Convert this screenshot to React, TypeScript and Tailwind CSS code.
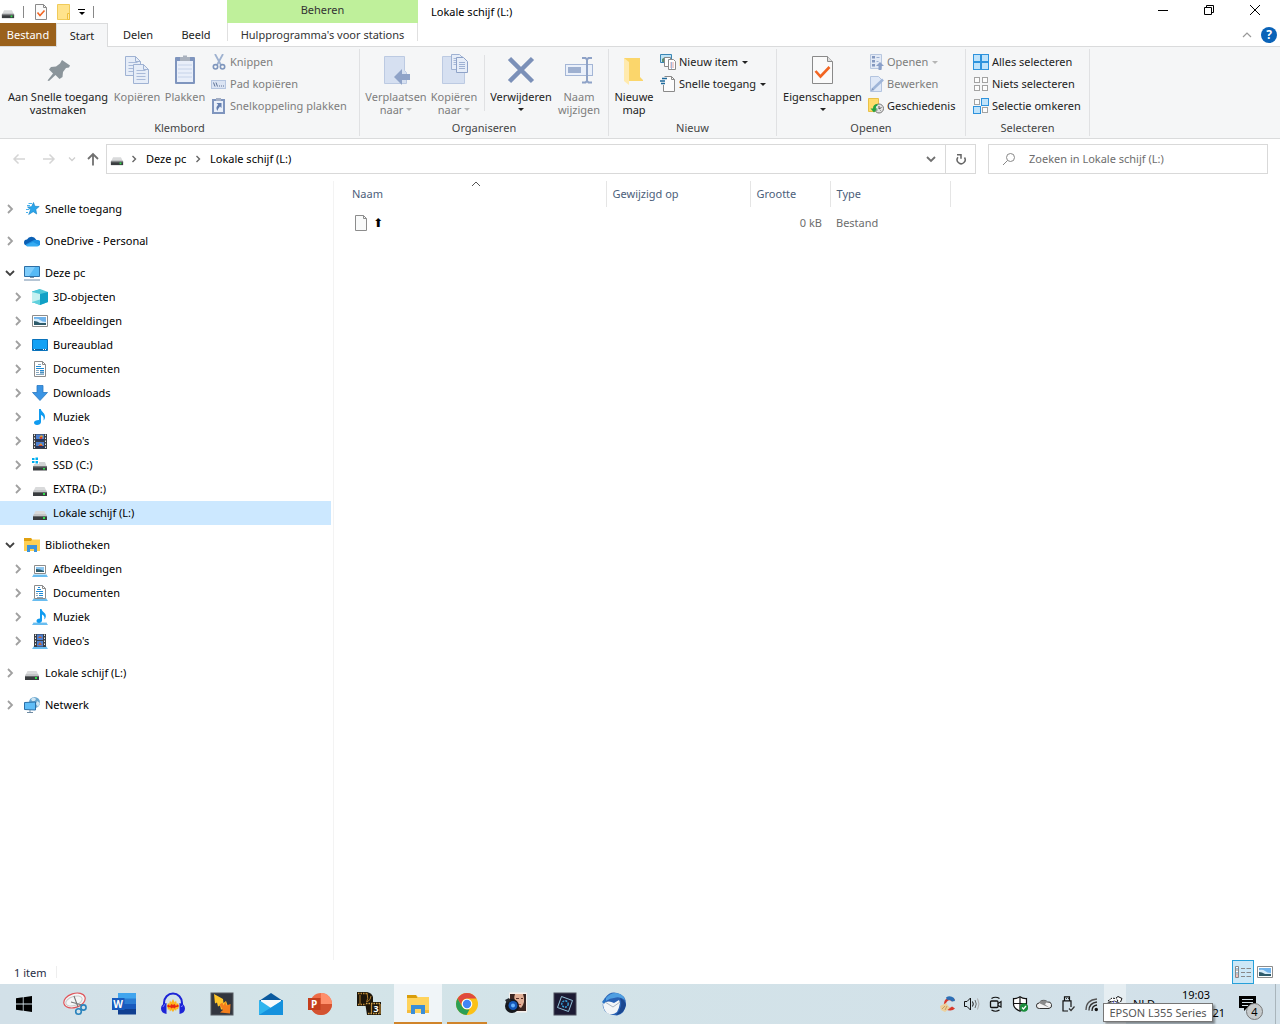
import React from "react";

type IconProps = { className?: string };

function Svg({ box = 16, className = "size-4", children }: { box?: number; className?: string; children: React.ReactNode }) {
  return (
    <svg viewBox={`0 0 ${box} ${box}`} className={`shrink-0 ${className}`} fill="none" aria-hidden="true">
      {children}
    </svg>
  );
}

/* ---------- shared icons ---------- */

const Drive = ({ className }: IconProps) => (
  <Svg className={className}>
    <path d="M3.500 6h9L15 11H1z" fill="#d9dadb" />
    <path d="M2 9h12l1 2H1z" fill="#c2c4c6" />
    <path d="M1 11h14v4H1z" fill="#3a3d40" />
    <path d="M1 11h14v1H1z" fill="#66696b" />
    <rect x="11" y="12" width="2" height="2" fill="#2fe04a" />
  </Svg>
);
const DriveWindows = () => (
  <Svg>
    <path d="M0 1h2.500v2H0zM3.500.5H6V3H3.500zM0 4h2.500v2H0zM3.500 4H6v2.500H3.500z" fill="#00adef" />
    <path d="M7 5h6l2 5H1l1-3h5z" fill="#d0d2d3" />
    <path d="M1 9.500h14v4H1z" fill="#3a3d40" />
    <path d="M1 9.500h14v1H1z" fill="#66696b" />
    <rect x="11" y="11" width="2" height="1.500" fill="#2fe04a" />
  </Svg>
);
const Caret = ({ className = "text-[#222]" }: IconProps) => (
  <svg viewBox="0 0 6 3" className={`inline-block h-[3px] w-[6px] shrink-0 ${className}`} aria-hidden="true">
    <path d="M0 0h6L3 3z" fill="currentColor" />
  </svg>
);
const CheckDoc = ({ className }: IconProps) => (
  <Svg className={className}>
    <path d="M2.500.5h8l3 3v12h-11z" fill="#fbfbfb" stroke="#8a8a8a" />
    <path d="M10.500.5v3h3" stroke="#8a8a8a" />
    <path d="M4.500 8.500l2.500 3 4.500-5" stroke="#f26522" strokeWidth="1.600" />
  </Svg>
);
const FolderDoc = () => (
  <Svg>
    <path d="M1.500.5h12v15h-12z" fill="#ffe38c" stroke="#f0cb5a" />
    <path d="M11.500 9.500h2v6h-2z" fill="#ffe9a4" stroke="#eebf3d" />
  </Svg>
);
const Chevron = ({ open }: { open?: boolean }) => (
  <Svg box={10} className="size-[10px]">
    {open ? (
      <path d="M1 3l4 4 4-4" stroke="#404040" strokeWidth="1.800" />
    ) : (
      <path d="M3 1l4 4-4 4" stroke="#a0a0a0" strokeWidth="1.800" />
    )}
  </Svg>
);

/* ---------- ribbon icons ---------- */

const Pin = () => (
  <Svg box={32} className="size-8">
    <path d="M20 6l8 5.500-1 2-3 .5-3 4-.5 5-3 2-4-4-6.500 6-1.500-.5 5.500-7-4-4 2-2.500 5-.5 4-3z" fill="#8b959b" />
  </Svg>
);
const page = (x: number, y: number, w: number, h: number) => (
  <g>
    <path d={`M${x} ${y}h${w - 5}l5 5v${h - 5}h-${w}z`} fill="#e6edf8" stroke="#9fb2d3" />
    <path d={`M${x + w - 5} ${y}v5h5`} stroke="#9fb2d3" />
    {[6, 9, 12, 15].map((d) => (
      <path key={d} d={`M${x + 3} ${y + d}h${w - 6}`} stroke="#a9bad9" />
    ))}
  </g>
);
const CopyIcon = () => (
  <Svg box={32} className="size-8">
    {page(4.5, 2.5, 15, 19)}
    {page(12.5, 10.5, 15, 19)}
  </Svg>
);
const PasteIcon = () => (
  <Svg box={32} className="size-8">
    <rect x="6" y="3" width="20" height="27" rx="1" fill="#7f95be" />
    <rect x="8" y="7" width="16" height="21" fill="#e9effa" />
    <path d="M11 3h3V1.500h4V3h3v4H11z" fill="#aab2be" />
    <path d="M9 11h14M9 15h14M9 19h14M9 23h14" stroke="#c6d3e9" />
  </Svg>
);
const Scissors = () => (
  <Svg>
    <path d="M4 0l6 11M12 0L6 11" stroke="#9fb2d0" strokeWidth="1.800" />
    <circle cx="4.500" cy="12.800" r="2.200" stroke="#7f96bd" strokeWidth="1.600" />
    <circle cx="11.500" cy="12.800" r="2.200" stroke="#7f96bd" strokeWidth="1.600" />
  </Svg>
);
const PathIcon = () => (
  <Svg>
    <rect x=".5" y="4.500" width="14" height="8" fill="#dbe4f3" stroke="#b6c6e0" />
    <path d="M2.500 6.500l1.500 4M5 6.500l1.500 4M8 10h1M10 10h1M12 10h1" stroke="#5d7195" />
  </Svg>
);
const PasteShortcut = () => (
  <Svg>
    <path d="M2 2h11v13H2z" fill="#eaf0fa" stroke="#7f95be" strokeWidth="2" />
    <path d="M5 0h5v3H5z" fill="#a3aec4" />
    <path d="M5.500 5h5v5L9 8.500Q7 10.500 6.500 13 4 9.500 7.200 6.800z" fill="#647fb0" />
  </Svg>
);
const MoveTo = () => (
  <Svg box={32} className="size-8">
    <path d="M4.500 2.500h20v14l2 2v11h-22z" fill="#d6e0f1" stroke="#bccae2" />
    <path d="M14 23l8-8v5h8v6h-8v5z" fill="#8fa3c8" />
  </Svg>
);
const CopyTo = () => (
  <Svg box={32} className="size-8">
    <path d="M4.500 2.500h20v14l2 2v11h-22z" fill="#d6e0f1" stroke="#bccae2" />
    <path d="M13.500.5h8l3 3v12h-11z" fill="#e6edf8" stroke="#9fb2d3" />
    <path d="M15.500 4.500h3M15.500 6.500h3M15.500 8.500h3M15.500 10.500h3" stroke="#a9bad9" />
    <path d="M18.500 3.500h7l4 4v11h-11z" fill="#e6edf8" stroke="#8fa3c8" />
    <path d="M21 8.500h6M21 10.500h6M21 12.500h6M21 14.500h6" stroke="#9fb2d3" />
  </Svg>
);
const DeleteIcon = () => (
  <Svg box={32} className="size-8">
    <path d="M4.500 4.500l23 23M27.500 4.500l-23 23" stroke="#7b90b8" strokeWidth="4.500" />
  </Svg>
);
const RenameIcon = () => (
  <Svg box={32} className="size-8">
    <rect x="2.500" y="10.500" width="27" height="11" fill="#eaf0fa" stroke="#a4b6d6" />
    <rect x="5" y="13" width="13" height="6" fill="#9eb0d0" />
    <path d="M19 4h3.500L24 5.500 25.500 4H29M24 5v23M19 28.500h3.500L24 27l1.500 1.500H29" stroke="#8ea2c7" strokeWidth="2" />
  </Svg>
);
const NewFolder = () => (
  <Svg box={32} className="size-8">
    <path d="M6 4h16v19l3 3v1H6z" fill="#fbd66b" />
    <path d="M6 4l5 4v23l-5-4z" fill="#ffeaae" />
  </Svg>
);
const NewItem = () => (
  <Svg>
    <path d="M.5.500h11v8H.5z" fill="#bfe4f7" stroke="#3a86b5" />
    <path d="M2 5l3-2 4 3v2H2z" fill="#5b8f70" />
    <path d="M4.500 3.500h6v9h-6z" fill="#fff" stroke="#8a8a8a" />
    <path d="M8.500 5.500h5l2 2v8h-7z" fill="#fff" stroke="#8a8a8a" />
    <path d="M10 9h4M10 11h4M10 13h4" stroke="#e0a2a2" />
    <path d="M11.500 8v7" stroke="#9db9e0" />
  </Svg>
);
const EasyAccess = () => (
  <Svg>
    <path d="M4.500.5h7l3 3v12h-11V9" fill="#fcfcfc" stroke="#8a8a8a" />
    <path d="M11.500.5v3h3" stroke="#8a8a8a" />
    <path d="M2 2.500h5M0 5h5M1 7.500h4" stroke="#1e6a9c" strokeWidth="1.300" />
  </Svg>
);
const BigProps = () => (
  <Svg box={32} className="size-8">
    <path d="M5.500 2.500h15l5 5v22h-20z" fill="#fafafa" stroke="#8a8a8a" />
    <path d="M20.500 2.500v5h5" stroke="#8a8a8a" fill="#ddd" />
    <path d="M8.500 17l5 5.500 9-9.500" stroke="#f26522" strokeWidth="2.600" />
  </Svg>
);
const OpenIcon = () => (
  <Svg>
    <path d="M2.500.5h11v14h-11z" fill="#e3eaf6" stroke="#b8c7df" />
    <path d="M4 2h3v2.500H4zM4 6h3v2.500H4zM4 10h3v2.500H4z" fill="#8498bf" />
    <path d="M8.500 3.500h3M8.500 7.500h2" stroke="#9bafd1" />
    <path d="M12 8l4 4h-2.500v4h-3v-4H8z" fill="#8ba0c8" />
  </Svg>
);
const EditIcon = () => (
  <Svg>
    <path d="M2.500.5h8l3 3v12h-11z" fill="#dfe8f7" stroke="#b3c4df" />
    <path d="M4.500 13.500L15 3.500" stroke="#9fb5d8" strokeWidth="2.600" />
    <path d="M3 15l1-3 2 2z" fill="#8197be" />
  </Svg>
);
const HistoryIcon = () => (
  <Svg>
    <path d="M.5.500h10v13H.5z" fill="#ffdc6b" stroke="#e9c048" />
    <circle cx="11" cy="10.500" r="4.500" fill="#e4e4e4" stroke="#777" />
    <path d="M11 8v3l2.500-1.500M8.500 12.500l1-.5M13 13l-.5-.5" stroke="#555" />
    <path d="M9.500 6Q5 6 5 10.500H2.500l3.500 4 3.500-4H7.800Q7.500 8 9.500 7.500z" fill="#25a343" />
  </Svg>
);
const boxes = (fills: boolean[]) =>
  fills.map((on, i) => {
    const x = (i % 2) * 8 + 1.5;
    const y = Math.floor(i / 2) * 8 + 1.5;
    return on ? (
      <rect key={i} x={x - 1} y={y - 1} width="7" height="7" fill="#bfe3fb" stroke="#2e93dd" />
    ) : (
      <rect key={i} x={x} y={y} width="5" height="5" fill="#fdfdfd" stroke="#a3a3a3" />
    );
  });

/* ---------- navigation icons ---------- */

const Star = () => (
  <Svg>
    <path d="M9.500 1.500l1.400 3.800 4.300.2-3.400 2.900.9 4.600-3.500-2.300-4.500 2.800 1.800-4.700L3.500 6l4-.3z" fill="#2ba5ea" stroke="#1681c4" strokeWidth=".6" />
    <path d="M4.500 2.500H8M3 4.500h3M2 8.500h3M2 11.500h2" stroke="#4ab3ee" />
  </Svg>
);
const OneDrive = () => (
  <Svg>
    <path d="M3 12.500A3 3 0 0 1 3 6.500 5 5 0 0 1 12 6.500L13 9z" fill="#0a5fb4" />
    <path d="M1.500 11.500L9 7.500a4 4 0 0 1 4-.5 3 3 0 0 1 1 6H3z" fill="#1d91e3" />
    <path d="M2 12l7-3 6 3a2 2 0 0 1-2 1.500H3z" fill="#35abf2" />
  </Svg>
);
const Pc = () => (
  <Svg>
    <path d="M.5 1.500h15v10H.5z" fill="#55b9f5" stroke="#2d6fa6" />
    <path d="M1 2h10L5 11H1z" fill="#80cdfb" />
    <path d="M6 12.500h4" stroke="#7890a5" />
    <path d="M0 15h16" stroke="#8ea6bd" strokeWidth="1.300" />
  </Svg>
);
const Cube = () => (
  <Svg>
    <path d="M0 2.500L8 0v13L0 13.500z" fill="#39bfd2" />
    <path d="M0 3l8-3 8 3v10l-8 3-8-3z" fill="#4ec8d8" />
    <path d="M0 3l8 2v8.500L0 13z" fill="#c4f1f1" />
    <path d="M8 5l8-2v10l-8 3z" fill="#10a0c6" />
    <path d="M0 13l8-2.500V16z" fill="#5fd0dc" />
  </Svg>
);
const Picture = () => (
  <Svg>
    <path d="M.5 2.500h15v11H.5z" fill="#fff" stroke="#8c8c8c" />
    <path d="M2 4h12v8H2z" fill="#6fb3ec" />
    <path d="M2 6q4-1 6 1t6 2v3H2z" fill="#d7ecfa" />
    <path d="M2 8q3 0 6 2h6v2H2z" fill="#2e5b6b" />
  </Svg>
);
const Desktop = () => (
  <Svg>
    <path d="M.5 2.500h15v11H.5z" fill="#12a1f5" stroke="#0a72bb" />
    <path d="M1 12.500h14" stroke="#0a5e9c" />
    <path d="M2 12.500h1M11 12.500h1M13 12.500h1" stroke="#fff" />
  </Svg>
);
const Doc = () => (
  <Svg>
    <path d="M2.500.5h8l3 3v12h-11z" fill="#fff" stroke="#8c8c8c" />
    <path d="M10.500.5v3h3" stroke="#8c8c8c" />
    <path d="M4 5.500h5M4 7.500h8M8 9.500h4" stroke="#1e8ad6" />
    <path d="M6 3.500h3M4 9.500h3M4 11.500h3M4 13.500h8" stroke="#88a7bd" />
    <path d="M8 10.500h4v2H8z" fill="#4b8fbe" />
  </Svg>
);
const Download = () => (
  <Svg>
    <path d="M5 .5h6v7h4.500L8 15.500.5 7.500H5z" fill="#3a94e4" stroke="#2a78c2" strokeWidth=".8" />
  </Svg>
);
const Music = () => (
  <Svg>
    <path d="M7 0h1.800c.4 3 4.700 4 4.200 8.500-.2 1.500-1 2.500-1.500 3 .7-3.500-.5-4.700-2.500-5.500v7c0 2-2 3-4 3s-3-1-3-2.500S4 11 7 11z" fill="#0f9bf0" />
  </Svg>
);
const Video = () => (
  <Svg>
    <path d="M1 1h14v15H1z" fill="#3b3f45" />
    <path d="M2.500 1.500v14M13.500 1.500v14" stroke="#e8e8e8" strokeDasharray="1.500 1.500" />
    <path d="M4 1.500h8v6.500H4zM4 9h8v6H4z" fill="#4d7fd0" />
    <path d="M4 6h8v2H4zM4 13h8v2H4z" fill="#25355c" />
    <path d="M7 5l2-3 2 1-1 3zM6 13l3-3 2 3z" fill="#d79a2e" />
    <path d="M8 4h2v2H8zM7 12h3v1H7z" fill="#d33a2c" />
  </Svg>
);
const LibBase = ({ children }: { children: React.ReactNode }) => (
  <Svg>
    <path d="M2 13h12l2 3H0z" fill="#69bdf0" />
    <path d="M2 13.500h12" stroke="#bfe3f8" />
    {children}
  </Svg>
);
const LibPicture = () => (
  <LibBase>
    <path d="M2.500 4.500h11v8h-11z" fill="#fff" stroke="#8c8c8c" />
    <path d="M4 6h8v5H4z" fill="#8cc6ef" />
    <path d="M4 8q4 0 8 2v1H4z" fill="#2e5b6b" />
  </LibBase>
);
const LibDoc = () => (
  <LibBase>
    <path d="M2.500.5h8l3 3v10h-11z" fill="#fff" stroke="#8c8c8c" />
    <path d="M10.500.5v3h3" stroke="#8c8c8c" />
    <path d="M6 2.500h2M5 4.500h4M4 6.500h7M7 8.500h4M7 10.500h4" stroke="#1e8ad6" />
    <path d="M4 8.500h2M4 10.500h2M5 12.500h6" stroke="#88a7bd" />
  </LibBase>
);
const LibMusic = () => (
  <LibBase>
    <path d="M8 0h1.500c.4 3 4.800 3.500 4.300 7.500-.2 1.500-1 2.500-1.500 3 .7-3-.5-4.200-2.300-5v6c0 1.500-1.500 2.500-3 2.500S4.500 13.200 4.500 12s1-2.500 3.500-2.500z" fill="#0f9bf0" />
  </LibBase>
);
const LibVideo = () => (
  <LibBase>
    <path d="M2 1h12v13H2z" fill="#3b3f45" />
    <path d="M3.500 1.500v12M12.500 1.500v12" stroke="#e8e8e8" strokeDasharray="1.500 1.500" />
    <path d="M5 1.500h6v5.500H5zM5 8h6v5.500H5z" fill="#4d7fd0" />
    <path d="M6 5l2-2 2 2zM6 12l2-3 2 3z" fill="#c9642e" />
  </LibBase>
);
const Library = () => (
  <Svg>
    <path d="M0 1h7l1 1.500h8V14H0z" fill="#ffcf52" />
    <path d="M0 1h7l1 1.500L7 4H0z" fill="#e0a010" />
    <path d="M3 15V8h10v7h-3v-3H6v3z" fill="#3d94da" />
  </Svg>
);
const Network = () => (
  <Svg>
    <circle cx="10.500" cy="5.500" r="5.500" fill="#6aa7cf" />
    <path d="M7 2q3-3 5 0-1 3-4 2zM13 4l3 2-2 4-2-3z" fill="#cfe5f2" />
    <path d="M.5 5.500l11-.5v8l-11-.5z" fill="#5fbdf7" stroke="#2a6fa8" />
    <path d="M3 15.500h6M6 13v2" stroke="#6f8ba3" />
  </Svg>
);
const FilePage = () => (
  <Svg>
    <path d="M2.500.5h8l3 3v12h-11z" fill="#f9fafa" stroke="#8c8c8c" />
    <path d="M10.500.5v3h3" stroke="#8c8c8c" />
  </Svg>
);

/* ---------- ribbon pieces ---------- */

function Big({ icon, lines, width, caret, disabled }: { icon: React.ReactNode; lines: string[]; width: string; caret?: boolean; disabled?: boolean }) {
  return (
    <button disabled={disabled} className={`flex flex-col items-center pt-[3px] leading-[13px] ${width} ${disabled ? "text-[#7d7d7d]" : "text-[#222]"}`}>
      {icon}
      <span className="mt-1 whitespace-nowrap">{lines[0]}</span>
      <span className="flex h-[13px] items-center gap-[3px] whitespace-nowrap">
        {lines[1]}
        {caret && <Caret className={disabled ? "text-[#b5b5b5]" : "text-[#222]"} />}
      </span>
    </button>
  );
}

function Small({ icon, text, caret, disabled }: { icon: React.ReactNode; text: string; caret?: boolean; disabled?: boolean }) {
  return (
    <button disabled={disabled} className={`flex h-[22px] items-center gap-[3px] whitespace-nowrap ${disabled ? "text-[#7d7d7d]" : "text-[#222]"}`}>
      {icon}
      <span>{text}</span>
      {caret && <Caret className={`ml-px ${disabled ? "text-[#b5b5b5]" : "text-[#222]"}`} />}
    </button>
  );
}

function Group({ label, width, children }: { label: string; width: string; children: React.ReactNode }) {
  return (
    <section aria-label={label} className={`my-[2px] flex shrink-0 flex-col border-r border-[#e0e1e3] ${width}`}>
      <div className="flex flex-1 items-start pt-[2px]">{children}</div>
      <div className="h-[15px] text-center leading-[14px] text-[#444]">{label}</div>
    </section>
  );
}

/* ---------- navigation tree ---------- */

type Node = { text: string; icon: React.ReactNode; open?: boolean; leaf?: boolean; selected?: boolean; children?: Node[] };

const tree: Node[] = [
  { text: "Snelle toegang", icon: <Star /> },
  { text: "OneDrive - Personal", icon: <OneDrive /> },
  {
    text: "Deze pc",
    icon: <Pc />,
    open: true,
    children: [
      { text: "3D-objecten", icon: <Cube /> },
      { text: "Afbeeldingen", icon: <Picture /> },
      { text: "Bureaublad", icon: <Desktop /> },
      { text: "Documenten", icon: <Doc /> },
      { text: "Downloads", icon: <Download /> },
      { text: "Muziek", icon: <Music /> },
      { text: "Video's", icon: <Video /> },
      { text: "SSD (C:)", icon: <DriveWindows /> },
      { text: "EXTRA (D:)", icon: <Drive /> },
      { text: "Lokale schijf (L:)", icon: <Drive />, leaf: true, selected: true },
    ],
  },
  {
    text: "Bibliotheken",
    icon: <Library />,
    open: true,
    children: [
      { text: "Afbeeldingen", icon: <LibPicture /> },
      { text: "Documenten", icon: <LibDoc /> },
      { text: "Muziek", icon: <LibMusic /> },
      { text: "Video's", icon: <LibVideo /> },
    ],
  },
  { text: "Lokale schijf (L:)", icon: <Drive /> },
  { text: "Netwerk", icon: <Network /> },
];

function Row({ node, nested }: { node: Node; nested?: boolean }) {
  return (
    <button className={`flex h-6 w-full items-center whitespace-nowrap text-left ${nested ? "pl-[13px]" : "pl-[5px]"} ${node.selected ? "bg-[#cce8ff]" : ""}`}>
      {node.leaf ? <span className="w-[10px]" /> : <Chevron open={node.open} />}
      <span className="ml-[9px] mr-[5px]">{node.icon}</span>
      {node.text}
    </button>
  );
}

/* ---------- taskbar icons ---------- */

const Start = () => (
  <Svg>
    <path d="M0 2.300L6.800 1.300v6.300H0zM7.600 1.200L16 0v7.600H7.600zM0 8.400h6.800v6.300L0 13.700zM7.600 8.400H16V16l-8.400-1.200z" fill="#000" />
  </Svg>
);
const Snip = () => (
  <Svg box={24} className="size-6">
    <ellipse cx="11.500" cy="8.500" rx="11" ry="7" transform="rotate(-18 11.500 8.500)" fill="#f4f6f7" stroke="#e0545a" strokeWidth="1.200" />
    <ellipse cx="11" cy="9" rx="8.500" ry="4.500" transform="rotate(-18 11 9)" stroke="#c9c9c9" />
    <path d="M11 4l4 11M8 10l11 3" stroke="#777" strokeWidth="1.100" />
    <circle cx="15.500" cy="19.500" r="2.800" stroke="#2a83bd" strokeWidth="1.600" />
    <circle cx="20.500" cy="15.500" r="2.600" stroke="#2a83bd" strokeWidth="1.600" />
  </Svg>
);
const Word = () => (
  <Svg box={24} className="size-6">
    <path d="M6 1h18v6H6z" fill="#41a5ee" />
    <path d="M6 6.500h18V12H6z" fill="#2b7cd3" />
    <path d="M6 12h18v5.500H6z" fill="#185abd" />
    <path d="M6 17h18v5.500H6z" fill="#103f91" />
    <path d="M0 6h12.500v12H0z" fill="#185abd" />
    <text x="6.200" y="15.500" fontSize="10" fontWeight="700" fill="#fff" textAnchor="middle" fontFamily="Open Sans, sans-serif">W</text>
  </Svg>
);
const Audacity = () => (
  <Svg box={24} className="size-6">
    <path d="M3 14v-3a9 9.500 0 0 1 18 0v3" stroke="#1d24d6" strokeWidth="2" />
    <path d="M6 14l1-3 1.200 1L9 8.500l1.200 2L12 7l1.800 3.500 1.200-2 .8 3.500 1.200-1 1 3-1 3.500-1.200-1-.8 2.500-1.200-1.500L12 20l-1.800-2L9 19.500 8.200 17 7 18z" fill="#ffb41a" />
    <path d="M6 14l1.500-1.500L9 14l1.500-2 1.500 1 1.500-1 1.500 2 1.500-1.500L18 14l-1.500 1L15 15l-1.500 1.500-1.500-1-1.500 1L9 15l-1.500.5z" fill="#e82a10" />
    <path d="M5.500 11v11C2 21.500 0 19.500 0 16.500S2 11.500 5.500 11zM18.500 11v11c3.500-.5 5.500-2.500 5.500-5.500s-2-5-5.500-5.500z" fill="#1d24d6" />
    <path d="M2 15q.5-2 2-2.500M20 15q1-2 2-1" stroke="#7a80ff" />
  </Svg>
);
const Winamp = () => (
  <Svg box={24} className="size-6">
    <rect x="1" y="1" width="22" height="22" fill="#32363f" stroke="#565a60" />
    <path d="M4 2l9 5 .5 4 2.500-2 3 8-8 .5-1-4-2 1-1-4-2 1z" fill="#ffc52a" />
    <path d="M9.500 12.500l3-2 1 3 2-4 1 4 4-1.500-.5 9.500-10-1 3-2.500z" fill="#f57f1c" />
  </Svg>
);
const Mail = () => (
  <Svg box={24} className="size-6">
    <path d="M0 9L12 1l12 8v3H0z" fill="#0b5a9e" />
    <path d="M2 8h20v9H2z" fill="#f7f9fb" />
    <path d="M0 8l12 8 12-8v15H0z" fill="#2fb4ee" />
    <path d="M0 23L24 8v15z" fill="#1591dd" />
  </Svg>
);
const PowerPoint = () => (
  <Svg box={24} className="size-6">
    <circle cx="13" cy="12" r="11" fill="#ed6c47" />
    <path d="M13 1a11 11 0 0 1 11 11H13z" fill="#ff8f6b" />
    <path d="M2 12h22a11 11 0 0 1-22 0z" fill="#d35230" />
    <path d="M0 6h12.500v12H0z" fill="#c43e1c" />
    <text x="6.200" y="15.500" fontSize="10" fontWeight="700" fill="#fff" textAnchor="middle" fontFamily="Open Sans, sans-serif">P</text>
  </Svg>
);
const Film = () => (
  <Svg box={24} className="size-6">
    <path d="M0 0h10q5 1 6 5v9H0z" fill="#1d160b" />
    <path d="M1 1.500h10M1 12.500h8" stroke="#c08a35" strokeWidth="1.500" strokeDasharray="1.500 1" />
    <path d="M3 3v9M10 1q2 5-1 11M14 4q0 4-4 6" stroke="#b37f30" />
    <path d="M8 10h16v13H10z" fill="#1d160b" />
    <path d="M9 11.500h15M11 21.500h13" stroke="#d0a04a" strokeWidth="1.500" strokeDasharray="1.500 1" />
    <path d="M14.500 12v9M23 12v9" stroke="#b98736" strokeWidth="1.200" />
    <text x="19" y="20" fontSize="9" fontWeight="700" fill="#fff" textAnchor="middle" fontFamily="Open Sans, sans-serif">3</text>
  </Svg>
);
const Explorer = () => (
  <Svg box={24} className="size-6">
    <path d="M1 3h9l2 2h11v16H1z" fill="#ffd35c" />
    <path d="M1 3h9l1.500 3H1z" fill="#d99d0b" />
    <path d="M5 22v-9h14v9h-4v-5H9v5z" fill="#3a8ed8" />
    <path d="M1 18h4v3H1zM19 18h4v3h-4z" fill="#f5bc3c" />
  </Svg>
);
const Chrome = () => (
  <Svg box={24} className="size-6">
    <circle cx="12" cy="12" r="11" fill="#fbc116" />
    <path d="M2.500 6.500A11 11 0 0 1 21.500 6.500H12a5.500 5.500 0 0 0-4.800 8.200z" fill="#df4a3e" />
    <path d="M2.500 6.500L7.200 14.700a5.500 5.500 0 0 0 4.800 2.800h2.500L11.500 23A11 11 0 0 1 2.500 6.500z" fill="#2b9f55" />
    <circle cx="12" cy="12" r="5.300" fill="#fff" />
    <circle cx="12" cy="12" r="4.200" fill="#4285f4" />
  </Svg>
);
const Photo = () => (
  <Svg box={24} className="size-6">
    <path d="M5 .5h18v20H5z" fill="#f6f0ec" />
    <path d="M6 2h16v17H6z" fill="#3a2420" />
    <path d="M11 2h8q3 8-2 14l-4-3q-4-6-2-11z" fill="#e2b096" />
    <path d="M12 6.500h3M17 6.500h2" stroke="#5a2e25" />
    <path d="M14 12.500h3" stroke="#b3463d" />
    <circle cx="8" cy="14" r="7" fill="#15181d" />
    <circle cx="9" cy="13.500" r="4.500" fill="#1458b8" />
    <circle cx="9" cy="13.500" r="2" fill="#66b4ff" />
    <path d="M1 8l4-2 2 3-4 2z" fill="#24272c" />
  </Svg>
);
const Elements = () => (
  <Svg box={24} className="size-6">
    <rect x="1" y="1" width="22" height="22" fill="#1c1a33" stroke="#4d4f5c" />
    <path d="M8.500 4.500l11 4-4 11-11-4z" stroke="#9fd4ea" strokeWidth=".9" />
    <circle cx="12" cy="12" r="3.200" stroke="#36a2dc" strokeWidth="1.400" strokeDasharray="2 1" />
  </Svg>
);
const Thunderbird = () => (
  <Svg box={24} className="size-6">
    <path d="M3 6Q8-1 15 1q9 2 9 11-1 10-9 11.500Q3 23 1 15q-1-5 2-9z" fill="#2a62b4" />
    <path d="M4 6Q10-1 18 2q4 2 5 6-5-4-11-2-4 0-8 3z" fill="#4f9fe2" />
    <path d="M1 11q6-3 11 0l5-3 1 3q-1 6-3 9-5 4-10 1-4-4-4-10z" fill="#f4f6f8" />
    <path d="M3 10l8 5 7-5" stroke="#a9b4c0" />
    <path d="M18 6q4 8-4 17 8-1 10-10-1-5-6-7z" fill="#1b4790" />
    <path d="M0 10l3-4 1 3-2 3z" fill="#2d75c5" />
  </Svg>
);

const apps: { name: string; icon: React.ReactNode; state?: "active" | "running" }[] = [
  { name: "Knipprogramma", icon: <Snip /> },
  { name: "Word", icon: <Word /> },
  { name: "Audacity", icon: <Audacity /> },
  { name: "Winamp", icon: <Winamp /> },
  { name: "Mail", icon: <Mail /> },
  { name: "PowerPoint", icon: <PowerPoint /> },
  { name: "Film", icon: <Film /> },
  { name: "Verkenner", icon: <Explorer />, state: "active" },
  { name: "Chrome", icon: <Chrome />, state: "running" },
  { name: "Foto", icon: <Photo /> },
  { name: "Elements", icon: <Elements /> },
  { name: "Thunderbird", icon: <Thunderbird /> },
];

const CCleaner = () => (
  <Svg>
    <path d="M15 3.500A6.500 6.500 0 1 0 15 12.500l-3-2a3.500 3.500 0 1 1 0-5z" fill="#d8382b" />
    <path d="M6 1.500Q10-1 14 2l1 3-3 .5Q10 3 7 4z" fill="#2d6fb5" />
    <path d="M0 10l6-3 4 5-5 4-4-2z" fill="#ecd09c" />
    <path d="M2 13l3-3M5 14l2-4" stroke="#c9a05c" />
  </Svg>
);
const Speaker = () => (
  <Svg>
    <path d="M.5 5.500h2.500L6.500 2v12L3 10.500H.5z" stroke="#111" />
    <path d="M8.500 5.500q1.500 2.500 0 5" stroke="#111" />
    <path d="M11 4q2.500 4 0 8" stroke="#666" />
    <path d="M13.500 2.500q3 5.500 0 11" stroke="#aaa" />
  </Svg>
);
const MeetNow = () => (
  <Svg>
    <rect x="2.500" y="5" width="7.500" height="6.500" rx="1" stroke="#111" strokeWidth="1.300" />
    <path d="M10 7.500l3-2v5.500L10 9.500" stroke="#111" strokeWidth="1.200" />
    <path d="M3.500 2.500q4-2.500 8 0M3.500 14q4 2.500 8 0" stroke="#111" strokeWidth="1.200" />
  </Svg>
);
const Shield = () => (
  <Svg>
    <path d="M8 .8q3 2 6.500 1.700V8q0 4.500-6.500 7.200Q1.500 12.500 1.500 8V2.500Q5 2.800 8 .8z" fill="#fff" stroke="#111" strokeWidth="1.200" />
    <path d="M8 1v14M1.500 7.500h13" stroke="#111" strokeWidth="1.200" />
    <circle cx="12" cy="11.500" r="4.300" fill="#1b8e3c" />
    <path d="M10 11.500l1.500 1.500 2.500-3" stroke="#fff" strokeWidth="1.200" />
  </Svg>
);
const Cloud = () => (
  <Svg>
    <path d="M3.300 12.500a2.700 2.700 0 0 1-.3-5.400A5 4.500 0 0 1 11.500 6a3.300 3.300 0 0 1 1.500 6.500z" fill="#f2f2f2" stroke="#333" />
    <path d="M3 7.100A5 4.500 0 0 1 11.500 6q-2 .5-2.500 2.500l5 3.500-9-4z" fill="#8b8b8b" />
  </Svg>
);
const Usb = () => (
  <Svg>
    <path d="M4.500.8h5v4h-5zM3 4.800h8V15H3z" stroke="#111" strokeWidth="1.200" />
    <path d="M6 2.500h.8M8 2.500h.8" stroke="#111" />
    <path d="M8 11h7v5H8z" fill="#d3e1e8" />
    <path d="M9 12.500l2 2 3.500-4" stroke="#333" strokeWidth="1.200" />
  </Svg>
);
const Wifi = () => (
  <Svg>
    <path d="M2 14Q2 4 13 3" stroke="#555" strokeWidth="1.300" />
    <path d="M5 14.500Q5 7 13 6" stroke="#333" strokeWidth="1.300" />
    <path d="M8 15q0-5.500 5-6" stroke="#222" strokeWidth="1.300" />
    <circle cx="12.300" cy="13.500" r="1.700" fill="#111" />
  </Svg>
);
const Printer = () => (
  <Svg>
    <path d="M1 5l4-3 6 1-1 4z" fill="#fff" stroke="#111" strokeDasharray="2 1" />
    <path d="M9 2l2-1.500 4 2L13.500 6" stroke="#111" fill="#fff" />
    <path d="M.5 7l7-2 7 3v6H.5z" fill="#e8eef1" stroke="#444" />
    <path d="M6 6h1M9 7h1" stroke="#22f" />
  </Svg>
);

const toolButton = "flex items-center justify-center";

export default function App() {
  return (
    <div className="flex h-screen min-h-[760px] flex-col overflow-hidden bg-white font-['Noto_Sans',sans-serif] text-[11px] leading-4 text-black">
      {/* title bar and tabs */}
      <header className="flex h-[46px] shrink-0">
        <div className="flex w-[227px] flex-col">
          <div className="flex h-[23px] items-center pl-px">
            <Drive className="size-[14px]" />
            <span className="ml-2 h-3 w-px bg-[#888]" />
            <button aria-label="Eigenschappen" className="ml-[9px]"><CheckDoc /></button>
            <button aria-label="Nieuwe map" className="ml-[7px]"><FolderDoc /></button>
            <button aria-label="Werkbalk aanpassen" className="ml-[6px] flex flex-col items-center gap-[2px]">
              <span className="h-px w-[7px] bg-black" />
              <Caret className="text-black" />
            </button>
            <span className="ml-2 h-3 w-px bg-[#888]" />
          </div>
          <nav className="flex h-[23px] leading-6">
            <button className="w-14 bg-[#9a611c] text-white">Bestand</button>
            <button className="relative z-10 -mb-px h-6 w-[52px] border border-b-0 border-[#dadbdc] bg-[#f5f6f7] leading-[22px] text-[#222]">Start</button>
            <button className="w-[60px] text-[#222]">Delen</button>
            <button className="w-14 text-[#222]">Beeld</button>
          </nav>
        </div>
        <div className="flex w-[191px] flex-col text-center text-[#333]">
          <div className="h-[23px] bg-[#bff09b] leading-5">Beheren</div>
          <button className="h-[18px] whitespace-nowrap border-x border-[#e0e0e0] pt-1 text-[#333]">
            Hulpprogramma's voor stations
          </button>
        </div>
        <h1 className="flex-1 pl-[13px] leading-6">Lokale schijf (L:)</h1>
        <div className="flex flex-col">
          <div className="flex h-[23px] w-[140px] pb-[3px] pr-[2px]">
            <button aria-label="Minimaliseren" className={`${toolButton} flex-1`}>
              <Svg box={10} className="size-[10px]"><path d="M0 5.500h10" stroke="#000" /></Svg>
            </button>
            <button aria-label="Verkleinen" className={`${toolButton} flex-1`}>
              <Svg box={10} className="size-[10px]"><path d="M.5 2.500h7v7h-7zM2.500 2.500v-2h7v7h-2" stroke="#000" /></Svg>
            </button>
            <button aria-label="Sluiten" className={`${toolButton} flex-1`}>
              <Svg box={10} className="size-[10px]"><path d="M0 0l10 10M10 0L0 10" stroke="#000" /></Svg>
            </button>
          </div>
          <div className="flex h-[23px] items-center justify-end gap-[9px] pr-[3px]">
            <button aria-label="Lint minimaliseren">
              <Svg box={10} className="size-[10px]"><path d="M1 7l4-4 4 4" stroke="#999" strokeWidth="1.200" /></Svg>
            </button>
            <button aria-label="Help" className="size-4 rounded-full bg-[#0a63b8] text-center text-[12px] font-bold text-white">?</button>
          </div>
        </div>
      </header>

      {/* ribbon */}
      <div className="flex h-[93px] shrink-0 border-y border-[#dadbdc] bg-[#f5f6f7]">
        <Group label="Klembord" width="w-[360px]">
          <Big icon={<Pin />} lines={["Aan Snelle toegang", "vastmaken"]} width="ml-1 w-[108px]" />
          <Big icon={<CopyIcon />} lines={["Kopiëren"]} width="w-[50px]" disabled />
          <Big icon={<PasteIcon />} lines={["Plakken"]} width="w-[46px]" disabled />
          <div className="ml-[3px]">
            <Small icon={<Scissors />} text="Knippen" disabled />
            <Small icon={<PathIcon />} text="Pad kopiëren" disabled />
            <Small icon={<PasteShortcut />} text="Snelkoppeling plakken" disabled />
          </div>
        </Group>
        <Group label="Organiseren" width="w-[249px]">
          <Big icon={<MoveTo />} lines={["Verplaatsen", "naar"]} width="ml-1 w-16" caret disabled />
          <Big icon={<CopyTo />} lines={["Kopiëren", "naar"]} width="w-[52px]" caret disabled />
          <span className="ml-1 mt-1 h-14 w-px bg-[#e0e1e3]" />
          <Big icon={<DeleteIcon />} lines={["Verwijderen"]} width="ml-[3px] w-[66px]" caret />
          <Big icon={<RenameIcon />} lines={["Naam", "wijzigen"]} width="w-[50px]" disabled />
        </Group>
        <Group label="Nieuw" width="w-[168px]">
          <Big icon={<NewFolder />} lines={["Nieuwe", "map"]} width="ml-1 w-[42px]" />
          <div className="ml-[5px]">
            <Small icon={<NewItem />} text="Nieuw item" caret />
            <Small icon={<EasyAccess />} text="Snelle toegang" caret />
          </div>
        </Group>
        <Group label="Openen" width="w-[189px]">
          <Big icon={<BigProps />} lines={["Eigenschappen"]} width="ml-1 w-[83px]" caret />
          <div className="ml-1">
            <Small icon={<OpenIcon />} text="Openen" caret disabled />
            <Small icon={<EditIcon />} text="Bewerken" disabled />
            <Small icon={<HistoryIcon />} text="Geschiedenis" />
          </div>
        </Group>
        <Group label="Selecteren" width="w-[124px]">
          <div className="ml-[7px]">
            <Small icon={<Svg>{boxes([true, true, true, true])}</Svg>} text="Alles selecteren" />
            <Small icon={<Svg>{boxes([false, false, false, false])}</Svg>} text="Niets selecteren" />
            <Small icon={<Svg>{boxes([false, true, true, false])}</Svg>} text="Selectie omkeren" />
          </div>
        </Group>
      </div>

      {/* address row */}
      <div className="flex h-10 shrink-0 items-center pr-3">
        <div className="flex w-[106px] items-center pl-3">
          <button aria-label="Terug" disabled>
            <Svg box={14} className="size-[14px]"><path d="M13 7H2M6.500 2.500L2 7l4.500 4.500" stroke="#d5d5d5" strokeWidth="1.500" /></Svg>
          </button>
          <button aria-label="Vooruit" disabled className="ml-4">
            <Svg box={14} className="size-[14px]"><path d="M1 7h11M7.500 2.500L12 7l-4.500 4.500" stroke="#d5d5d5" strokeWidth="1.500" /></Svg>
          </button>
          <button aria-label="Recente locaties" className="ml-3">
            <Svg box={8} className="size-2"><path d="M1 2.500l3 3 3-3" stroke="#cfcfcf" strokeWidth="1.300" /></Svg>
          </button>
          <button aria-label="Omhoog" className="ml-[10px]">
            <Svg box={14} className="size-[14px]"><path d="M7 13.500V2M2 7l5-5 5 5" stroke="#707070" strokeWidth="1.800" /></Svg>
          </button>
        </div>
        <div className="flex h-[30px] flex-1 items-stretch border border-[#d9d9d9]">
          <div className="flex flex-1 items-center whitespace-nowrap pl-[3px]">
            <Drive className="size-[14px]" />
            <Svg box={8} className="ml-[6px] size-2"><path d="M2.500 1l3 3-3 3" stroke="#666" strokeWidth="1.400" /></Svg>
            <button className="ml-2 w-[42px] text-left">Deze pc</button>
            <Svg box={8} className="ml-[6px] size-2"><path d="M2.500 1l3 3-3 3" stroke="#666" strokeWidth="1.400" /></Svg>
            <button className="ml-2">Lokale schijf (L:)</button>
          </div>
          <button aria-label="Vorige locaties" className={`${toolButton} w-7`}>
            <Svg box={10} className="size-[10px]"><path d="M1 3l4 4 4-4" stroke="#707070" strokeWidth="1.800" /></Svg>
          </button>
          <button aria-label="Vernieuwen" className={`${toolButton} w-[30px] border-l border-[#d9d9d9]`}>
            <Svg box={12} className="size-3"><path d="M3 4.200a4 4 0 1 0 6.500.3M2 1.700h4v4" stroke="#666" strokeWidth="1.500" /></Svg>
          </button>
        </div>
        <label className="ml-3 flex h-[30px] w-[280px] items-center border border-[#d9d9d9] pl-[13px]">
          <Svg box={14} className="size-[14px]"><circle cx="8.500" cy="5.500" r="4" stroke="#888" /><path d="M5.500 8.500L1 13" stroke="#888" /></Svg>
          <input aria-label="Zoeken" placeholder="Zoeken in Lokale schijf (L:)" className="ml-[13px] w-full bg-transparent outline-none placeholder:text-[#6d6d6d]" />
        </label>
      </div>

      {/* navigation and files */}
      <main className="flex min-h-0 flex-1 pt-[2px]">
        <nav className="w-[334px] shrink-0 border-r border-[#f3f3f3] pr-[2px] pt-4">
          <ul className="flex flex-col gap-2">
            {tree.map((node) => (
              <li key={node.text}>
                <Row node={node} />
                {node.children && (
                  <ul>
                    {node.children.map((child) => (
                      <li key={child.text}>
                        <Row node={child} nested />
                      </li>
                    ))}
                  </ul>
                )}
              </li>
            ))}
          </ul>
        </nav>
        <div className="flex-1 pl-3">
          <table className="w-[605px] table-fixed text-left text-[#6d6d6d]">
            <thead>
              <tr className="h-[26px] text-[#4c607a] [&>th]:border-r [&>th]:border-[#e5e5e5] [&>th]:pl-[6px] [&>th]:font-normal">
                <th className="relative w-[260px]">
                  Naam
                  <span className="absolute left-[125px] top-0">
                    <Svg box={10} className="size-[10px]"><path d="M1 5l4-4 4 4" stroke="#555" /></Svg>
                  </span>
                </th>
                <th className="w-36">Gewijzigd op</th>
                <th className="w-20">Grootte</th>
                <th>Type</th>
              </tr>
            </thead>
            <tbody>
              <tr className="h-8">
                <td className="pl-[7px]">
                  <span className="flex items-center gap-1 text-black">
                    <FilePage />
                    <span className="font-['DejaVu_Sans',sans-serif] text-[12px]">⬆</span>
                  </span>
                </td>
                <td />
                <td className="pr-2 text-right">0 kB</td>
                <td className="pl-[6px]">Bestand</td>
              </tr>
            </tbody>
          </table>
        </div>
      </main>

      {/* status bar */}
      <footer className="flex h-6 shrink-0 items-center text-[#1f2d45]">
        <span className="pl-[14px] pt-px">1 item</span>
        <span className="ml-[10px] h-3 w-px bg-[#eee]" />
        <div className="ml-auto flex items-center pr-[7px]">
          <button aria-label="Details" className={`${toolButton} h-6 w-[22px] border border-[#26a0da] bg-[#cce8f7]`}>
            <Svg>
              <path d="M.5 2.500h3v11h-3zM.5 6h3M.5 10h3" stroke="#888" fill="#fff" />
              <path d="M2 4v1M2 8v1" stroke="#2f7fc0" />
              <path d="M2 11.500v1" stroke="#c00" />
              <path d="M6 4.500h4M11.500 4.500H16M6 8.500h4M11.500 8.500H16M6 12.500h4M11.500 12.500H16" stroke="#888" />
            </Svg>
          </button>
          <button aria-label="Grote pictogrammen" className="ml-[3px]"><Picture /></button>
        </div>
      </footer>

      {/* taskbar */}
      <div className="relative flex h-10 shrink-0 bg-linear-to-r from-[#d2e0e8] via-[#d3e4e8] via-25% to-[#d2e0e9]">
        <button aria-label="Start" className={`${toolButton} w-12`}><Start /></button>
        <div className="ml-[3px] flex gap-px">
          {apps.map((app) => (
            <button key={app.name} aria-label={app.name} className={`relative w-12 ${toolButton} ${app.state === "active" ? "border-b-2 border-[#d0842a] bg-[#f0f5f8] pt-[2px]" : ""}`}>
              {app.icon}
              {app.state === "running" && <span className="absolute inset-x-1 bottom-0 h-[2px] bg-[#d0842a]" />}
            </button>
          ))}
        </div>
        <div className="ml-auto flex items-center gap-2">
          <CCleaner />
          <Speaker />
          <MeetNow />
          <Shield />
          <Cloud />
          <Usb />
          <Wifi />
          <span className="-ml-1 flex h-10 w-[22px] items-center justify-center bg-[#e6eef2]"><Printer /></span>
          <span className="-ml-px w-6 whitespace-nowrap">NLD</span>
        </div>
        <div className="ml-[10px] w-[58px] pt-[2px] text-center leading-[18px]">
          <div>19:03</div>
          <div className="text-right">2021</div>
        </div>
        <button aria-label="Meldingen" className="relative ml-[10px] w-10">
          <Svg box={18} className="absolute left-1 top-3 size-[18px]">
            <path d="M0 0h17v12H8l-3 3v-3H0z" fill="#000" />
            <path d="M3 3.500h11M3 6.500h11M3 9.500h6" stroke="#d3e1e8" />
          </Svg>
          <span className="absolute left-[11px] top-[19px] size-[17px] rounded-full border border-[#777] bg-[#c6cacc] text-center leading-[15px]">4</span>
        </button>
        <span className="mr-1 w-px bg-[#a9b5bc]" />
        <div role="tooltip" className="absolute bottom-[2px] right-[67px] h-[19px] w-[110px] whitespace-nowrap border border-[#767676] bg-white text-center leading-[17px] text-[#575757] shadow-[2px_2px_2px_rgba(0,0,0,0.4)]">
          EPSON L355 Series
        </div>
      </div>
    </div>
  );
}
